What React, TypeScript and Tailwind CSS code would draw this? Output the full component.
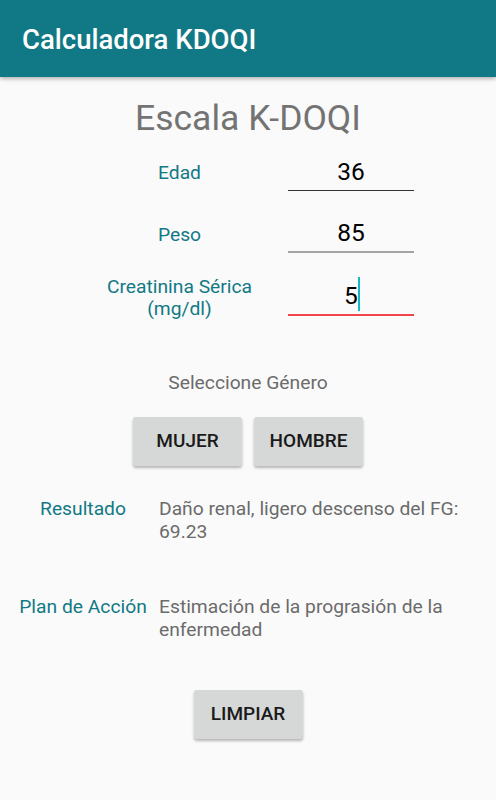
import React from "react";

const TEAL = "text-[#117985]";

function InputRow({
    label,
    value,
    line,
    cursor,
    className,
}: {
    label: React.ReactNode;
    value: string;
    line: string;
    cursor?: boolean;
    className?: string;
}) {
    return (
        <div className={`flex h-[40px] items-center pl-[71px] ${className ?? ""}`}>
            <div className={`mt-[4px] w-[217px] text-center text-[19.25px] leading-[22.5px] ${TEAL}`}>{label}</div>
            <div className={`flex h-[40px] w-[126px] items-center justify-center pt-[2px] ${line}`}>
                <span className="relative text-[24.5px] leading-[28px] text-black">
                    {value}
                    {cursor && <span className="absolute -right-[2px] top-[-5px] h-[34px] w-[2px] bg-[#14b8c4]" />}
                </span>
            </div>
        </div>
    );
}

function GrayButton({ children }: { children: React.ReactNode }) {
    return (
        <button className="flex h-[49px] w-[109px] items-center justify-center rounded-[3px] bg-[#d6d7d7] text-[19px] font-medium text-[#1a1a1a] shadow-[0_2px_3px_rgba(0,0,0,0.28)]">
            {children}
        </button>
    );
}

export default function App() {
    return (
        <div className="flex min-h-[800px] flex-col bg-[#fafafa]" style={{ fontFamily: "Roboto, 'Noto Sans', sans-serif" }}>
            <header className="relative z-10 flex h-[77px] items-center bg-[#117985] px-[22px] pt-[3px] shadow-[0_2px_4px_rgba(0,0,0,0.28)]">
                <h1 className="text-[27.5px] font-medium leading-[32px] text-white">Calculadora KDOQI</h1>
            </header>

            <h2 className="mt-[20px] text-center text-[35.5px] leading-[42px] text-[#737373]">Escala K-DOQI</h2>

            <InputRow className="mt-[12px]" label="Edad" value="36" line="border-b border-[#333]" />
            <InputRow className="mt-[22px]" label="Peso" value="85" line="border-b-2 border-[#a3a3a3]" />
            <InputRow
                className="mt-[23px]"
                label={
                    <>
                        Creatinina Sérica
                        <br />
                        (mg/dl)
                    </>
                }
                value="5"
                line="border-b-2 border-[#f2444a]"
                cursor
            />

            <p className="mt-[56px] text-center text-[19.25px] leading-[22px] text-[#6b6b6b]">Seleccione Género</p>

            <div className="mt-[23px] flex justify-center gap-[12px]">
                <GrayButton>MUJER</GrayButton>
                <GrayButton>HOMBRE</GrayButton>
            </div>

            <div className="mt-[32px] flex gap-[9px] px-[16px] text-[19.25px] leading-[22.5px]">
                <div className={`w-[134px] shrink-0 text-center ${TEAL}`}>Resultado</div>
                <div className="flex-1 pr-[4px] text-[#6b6b6b]">Daño renal, ligero descenso del FG: 69.23</div>
            </div>

            <div className="mt-[52px] flex gap-[9px] px-[16px] text-[19.25px] leading-[23px]">
                <div className={`w-[134px] shrink-0 text-center ${TEAL}`}>Plan de Acción</div>
                <div className="flex-1 pr-[4px] text-[#6b6b6b]">Estimación de la prograsión de la enfermedad</div>
            </div>

            <div className="mt-[49px] flex justify-center">
                <GrayButton>LIMPIAR</GrayButton>
            </div>
        </div>
    );
}
